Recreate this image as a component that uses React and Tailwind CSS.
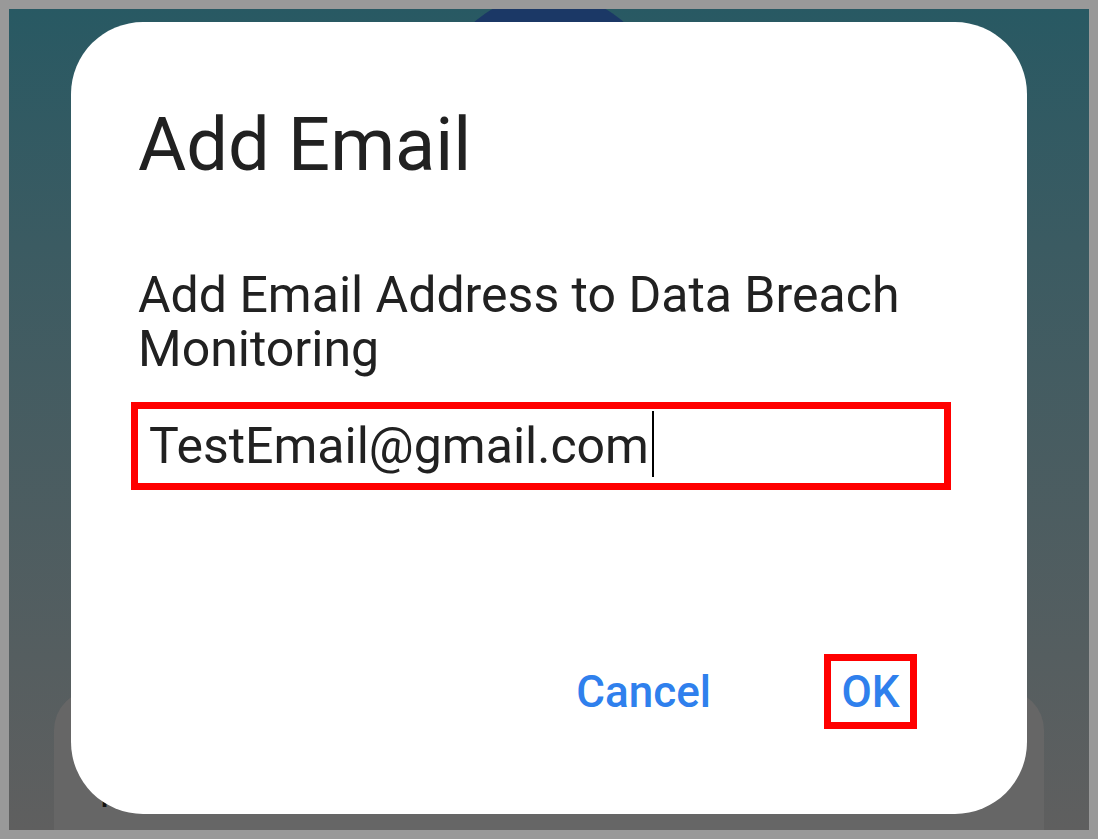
export default function App() {
  return (
    <div className="w-[1098px] h-[839px] bg-[#999999] p-[9px] font-['Roboto',sans-serif]">
      <div className="relative w-full h-full overflow-hidden bg-linear-to-b from-[#285963] to-[#5f5f5f]">
        {/* avatar peeking behind the dialog */}
        <div className="absolute left-[426px] top-[-15px] w-[228px] h-[228px] rounded-full bg-[#1b3866]" />

        {/* card behind the dialog */}
        <div className="absolute left-[45px] top-[681px] w-[990px] h-[200px] rounded-[40px] bg-[#666666] pl-[46px] pt-[76px]">
          <p className="text-[40px] leading-none text-[#111111]">privacy monitoring for your accounts</p>
        </div>

        {/* dialog */}
        <div className="absolute left-[62px] top-[13px] w-[956px] h-[792px] rounded-[72px] bg-white flex flex-col px-[67px]">
          <h1 className="mt-[86px] text-[74px] leading-none text-[#212121]">Add Email</h1>
          <p className="mt-[86px] text-[50px] leading-[54px] text-[#212121]">
            Add Email Address to Data Breach Monitoring
          </p>

          <div className="mt-[26px] -ml-[7px] w-[820px] h-[88px] border-[7px] border-[#ff0000] pl-[11px] flex items-center">
            <span className="text-[50px] leading-[74px] text-[#212121]">TestEmail@gmail.com</span>
            <span className="inline-block w-[2px] h-[66px] bg-black ml-[3px] -mt-[4px]" />
          </div>

          <div className="mt-auto pb-[85px] mr-[43px] flex justify-end items-center gap-[113px]">
            <button className="text-[44px] leading-none font-medium text-[#2f80ed]">Cancel</button>
            <button className="w-[93px] h-[75px] border-[7px] border-[#ff0000] flex items-center justify-center text-[44px] leading-none font-medium text-[#2f80ed]">
              OK
            </button>
          </div>
        </div>
      </div>
    </div>
  )
}
